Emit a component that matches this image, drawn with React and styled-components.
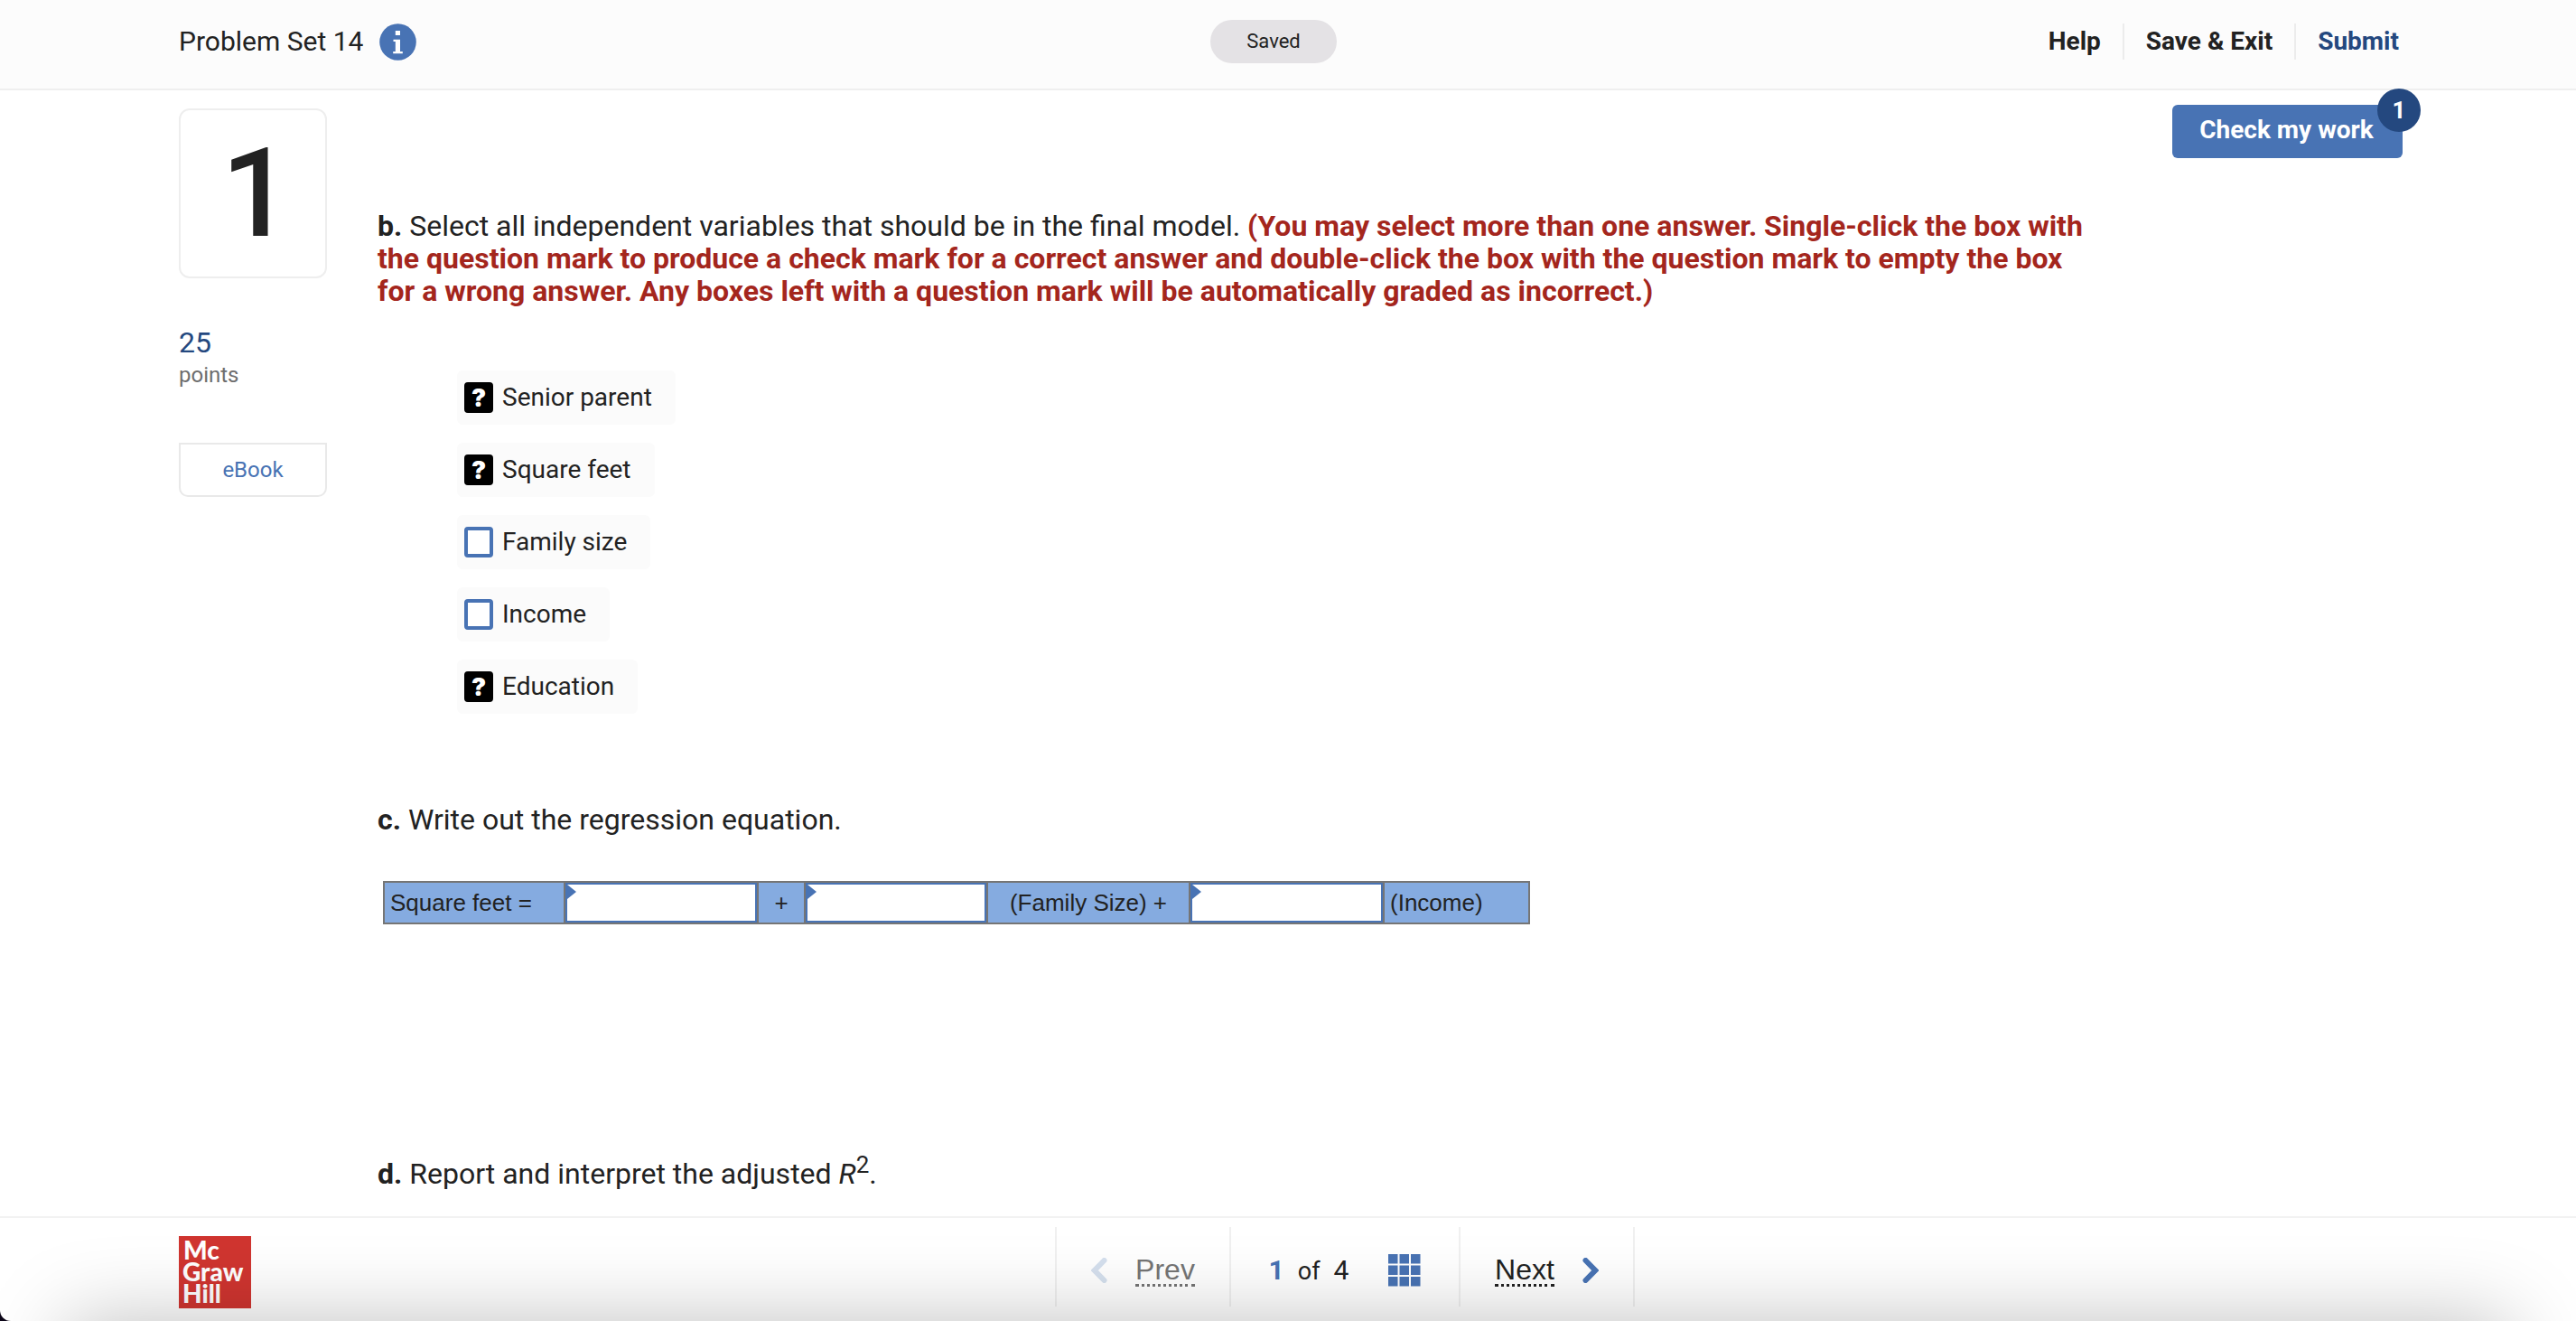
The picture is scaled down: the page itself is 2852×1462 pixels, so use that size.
import { useState } from "react";
import styled, { createGlobalStyle } from "styled-components";

const GlobalStyle = createGlobalStyle`
  * {
    box-sizing: border-box;
  }
  body {
    margin: 0;
    background: #0c0618;
    color: #222;
    font-family: Roboto, "Liberation Sans", sans-serif;
    font-size: 32px;
    line-height: 36px;
  }
  h1, h2, p, ul {
    margin: 0;
    padding: 0;
    font-size: inherit;
    font-weight: 400;
  }
  a {
    color: inherit;
    text-decoration: none;
  }
  button {
    border: 0;
    padding: 0;
    background: none;
    color: inherit;
    font: inherit;
    cursor: pointer;
  }
`;

const Page = styled.div`
  display: flex;
  flex-direction: column;
  min-height: 100vh;
  background: #fff;
  border-bottom-left-radius: 12px;
  overflow: hidden;
`;

const Header = styled.header`
  display: grid;
  grid-template-columns: 1fr auto 1fr;
  align-items: center;
  padding: 22px 196px 28px 198px;
  background: #fcfcfc;
  border-bottom: 2px solid #efefef;
`;

const TitleGroup = styled.div`
  display: flex;
  align-items: center;
  gap: 18px;
  h1 {
    font-size: 30px;
  }
`;

const InfoButton = styled.button`
  display: flex;
`;

const Saved = styled.div`
  width: 140px;
  margin-right: 34px;
  border-radius: 24px;
  background: #e4e2e5;
  font-size: 22px;
  line-height: 48px;
  text-align: center;
`;

const Actions = styled.nav`
  display: flex;
  justify-content: flex-end;
  font-size: 28px;
  font-weight: 700;
  line-height: 40px;
`;

const Action = styled.a`
  padding-left: 24px;
  color: ${({ $primary }) => ($primary ? "#24487f" : "#222")};
  &:not(:last-child) {
    padding-right: 24px;
    border-right: 2px solid #ececec;
  }
`;

const Main = styled.main`
  display: flex;
  flex: 1;
  align-items: flex-start;
  padding: 0 192px 0 198px;
`;

const Side = styled.aside`
  flex: none;
  width: 164px;
  padding-top: 20px;
`;

const QuestionNumber = styled.h2`
  padding-left: 8px;
  border: 2px solid #eee;
  border-radius: 12px;
  font-size: 138px;
  font-weight: 500;
  line-height: 184px;
  text-align: center;
`;

const Points = styled.div`
  display: flex;
  flex-direction: column;
  margin: 53px 0 57px;
  color: #6e6e6e;
  font-size: 24px;
  strong {
    color: #24487f;
    font-size: 32px;
    font-weight: 400;
  }
`;

const Ebook = styled.button`
  width: 100%;
  height: 60px;
  border: 2px solid #e9e9e9;
  border-radius: 0 0 10px 10px;
  color: #4873b4;
  font-size: 24px;
`;

const Question = styled.section`
  flex: 0 1 1900px;
  margin-left: 56px;
  padding-top: 132px;
`;

const Note = styled.strong`
  color: #a4261d;
`;

const Options = styled.ul`
  display: flex;
  flex-direction: column;
  align-items: flex-start;
  gap: 20px;
  margin: 70px 0 99px 88px;
  list-style: none;
`;

const Option = styled.label`
  display: flex;
  align-items: center;
  gap: 10px;
  height: 60px;
  padding: 0 26px 0 8px;
  border-radius: 6px;
  background: #fbfbfb;
  font-size: 28px;
`;

const Check = styled.input`
  display: flex;
  align-items: center;
  justify-content: center;
  appearance: none;
  width: 32px;
  height: 34px;
  margin: 0;
  border: 4px solid ${({ $mark }) => ($mark === "?" ? "#000" : "#4873b4")};
  border-radius: 4px;
  background: ${({ $mark }) => ($mark === "?" ? "#000" : "#fff")};
  color: ${({ $mark }) => ($mark === "?" ? "#fff" : "#4873b4")};
  font: 900 27px/27px Inter, sans-serif;
  &::after {
    content: "${({ $mark }) => $mark}";
  }
`;

const Equation = styled.table`
  width: 1270px;
  max-width: 100%;
  margin: 50px 0 258px 6px;
  table-layout: fixed;
  border-collapse: collapse;
  font-family: "Liberation Sans", Arial, sans-serif;
  font-size: 26px;
`;

const Cell = styled.td`
  position: relative;
  width: ${({ $width }) => $width}px;
  padding: 0 ${({ $pad = 0 }) => $pad}px;
  border: 2px solid #757575;
  background: #85abe0;
  text-align: ${({ $align = "left" }) => $align};
`;

const Blank = styled.input`
  display: block;
  width: 100%;
  height: 44px;
  padding: 0 14px;
  border: 2px solid #4873b4;
  background: #fff;
  font: inherit;
`;

const Flag = styled.svg`
  position: absolute;
  top: 2px;
  left: 2px;
`;

const Sup = styled.sup`
  font-size: 26px;
  line-height: 0;
`;

const CheckWork = styled.button`
  position: relative;
  flex: none;
  width: 255px;
  height: 59px;
  margin: 16px 0 0 auto;
  padding: 0 32px 4px 30px;
  border-radius: 6px;
  background: #4873b4;
  color: #fff;
  font-size: 28px;
  font-weight: 700;
  white-space: nowrap;
`;

const Badge = styled.span`
  position: absolute;
  top: -18px;
  right: -20px;
  width: 48px;
  border-radius: 50%;
  background: #24487f;
  font-size: 26px;
  line-height: 48px;
`;

const Footer = styled.footer`
  display: grid;
  grid-template-columns: 1fr auto 1fr;
  align-items: start;
  padding: 10px 72px 14px 198px;
  border-top: 2px solid #f2f2f2;
`;

const Logo = styled.svg`
  display: block;
  margin-top: 10px;
`;

const Pager = styled.nav`
  display: flex;
`;

const PagerCell = styled.div`
  display: flex;
  align-items: center;
  justify-content: center;
  width: ${({ $wide }) => ($wide ? 254 : 193)}px;
  height: 88px;
  padding-top: 8px;
  border-left: 2px solid #f0f0f0;
  &:last-child {
    width: 195px;
    border-right: 2px solid #f0f0f0;
  }
`;

const PagerButton = styled.button`
  display: flex;
  align-items: center;
  gap: 31px;
  color: #222;
  font-family: "Liberation Sans", Arial, sans-serif;
  &:disabled {
    color: #757575;
  }
  span {
    border-bottom: 3px dotted currentColor;
    line-height: 32px;
  }
`;

const Count = styled.p`
  display: flex;
  align-items: baseline;
  gap: 15px;
  margin-right: 44px;
  font-size: 30px;
  strong {
    color: #4873b4;
  }
  span {
    font-size: 27px;
  }
`;

const Shade = styled.div`
  position: fixed;
  top: 100%;
  left: 74px;
  right: 74px;
  height: 200px;
  box-shadow: 0 0 90px rgba(0, 0, 0, 0.25);
  pointer-events: none;
`;

const InfoIcon = () => (
  <svg width="41" height="41" viewBox="0 0 41 41" aria-hidden="true">
    <circle cx="20.5" cy="20.5" r="20.3" fill="#4873b4" />
    <path
      fill="#fff"
      d="M17.8 8H23v5h-5.2zM15.5 17.7H23V31h2.8v2.2H15.2V31h2.6V20h-2.3z"
    />
  </svg>
);

const Chevron = ({ left, color }) => (
  <svg width="18" height="28" viewBox="0 0 18 28" aria-hidden="true">
    <path
      d={left ? "M14.5 3 L3.8 14 L14.5 25" : "M3.5 3 L14.2 14 L3.5 25"}
      fill="none"
      stroke={color}
      strokeWidth="6"
      strokeLinecap="round"
    />
  </svg>
);

const GridIcon = () => (
  <svg width="36" height="36" viewBox="0 0 36 36" fill="#4873b4" aria-hidden="true">
    {[0, 12.5, 25].map((y) =>
      [0, 12.5, 25].map((x) => <rect key={x} x={x} y={y} width="10.5" height="10.5" />)
    )}
  </svg>
);

const McGrawHill = () => (
  <Logo
    width="80"
    height="80"
    viewBox="0 0 80 80"
    fontFamily="Lato, sans-serif"
    fontSize="28"
    fontWeight="900"
  >
    <rect width="80" height="80" fill="#d03530" />
    <g fill="#fff">
      <text x="5" y="26">Mc</text>
      <text x="4" y="50">Graw</text>
      <text x="4" y="74">Hill</text>
    </g>
  </Logo>
);

const AnswerCell = ({ width, label }) => (
  <Cell $width={width}>
    <Blank type="text" aria-label={label} />
    <Flag width="10" height="16" viewBox="0 0 10 16" aria-hidden="true">
      <path d="M0 0 L10 8 L0 16 Z" fill="#4873b4" />
    </Flag>
  </Cell>
);

const nextMark = { "?": "✓", "✓": "", "": "✓" };

const App = () => {
  const [marks, setMarks] = useState({
    "Senior parent": "?",
    "Square feet": "?",
    "Family size": "",
    Income: "",
    Education: "?",
  });

  const toggle = (name) =>
    setMarks((prev) => ({ ...prev, [name]: nextMark[prev[name]] }));

  return (
    <Page>
      <GlobalStyle />
      <Header>
        <TitleGroup>
          <h1>Problem Set 14</h1>
          <InfoButton aria-label="Assignment information">
            <InfoIcon />
          </InfoButton>
        </TitleGroup>
        <Saved>Saved</Saved>
        <Actions>
          <Action href="#help">Help</Action>
          <Action href="#exit">Save &amp; Exit</Action>
          <Action href="#submit" $primary>
            Submit
          </Action>
        </Actions>
      </Header>

      <Main>
        <Side>
          <QuestionNumber>1</QuestionNumber>
          <Points>
            <strong>25</strong>
            <span>points</span>
          </Points>
          <Ebook>eBook</Ebook>
        </Side>

        <Question>
          <p>
            <strong>b.</strong> Select all independent variables that should be
            in the final model.{" "}
            <Note>
              (You may select more than one answer. Single-click the box with
              the question mark to produce a check mark for a correct answer and
              double-click the box with the question mark to empty the box for a
              wrong answer. Any boxes left with a question mark will be
              automatically graded as incorrect.)
            </Note>
          </p>
          <Options>
            {Object.entries(marks).map(([name, mark]) => (
              <li key={name}>
                <Option>
                  <Check
                    type="checkbox"
                    $mark={mark}
                    checked={mark === "✓"}
                    onChange={() => toggle(name)}
                  />
                  {name}
                </Option>
              </li>
            ))}
          </Options>

          <p>
            <strong>c.</strong> Write out the regression equation.
          </p>
          <Equation>
            <tbody>
              <tr>
                <Cell $width={200} $pad={6}>
                  Square feet =
                </Cell>
                <AnswerCell width={214} label="Intercept" />
                <Cell $width={52} $align="center">
                  +
                </Cell>
                <AnswerCell width={202} label="Family size coefficient" />
                <Cell $width={224} $align="center">
                  (Family Size) +
                </Cell>
                <AnswerCell width={215} label="Income coefficient" />
                <Cell $width={161} $pad={6}>
                  (Income)
                </Cell>
              </tr>
            </tbody>
          </Equation>

          <p>
            <strong>d.</strong> Report and interpret the adjusted <i>R</i>
            <Sup>2</Sup>.
          </p>
        </Question>

        <CheckWork>
          Check my work
          <Badge>1</Badge>
        </CheckWork>
      </Main>

      <Footer>
        <McGrawHill />
        <Pager>
          <PagerCell>
            <PagerButton disabled>
              <Chevron left color="#d5e0ee" />
              <span>Prev</span>
            </PagerButton>
          </PagerCell>
          <PagerCell $wide>
            <Count>
              <strong>1</strong>
              <span>of</span>4
            </Count>
            <InfoButton aria-label="Question list">
              <GridIcon />
            </InfoButton>
          </PagerCell>
          <PagerCell>
            <PagerButton>
              <span>Next</span>
              <Chevron color="#4873b4" />
            </PagerButton>
          </PagerCell>
        </Pager>
      </Footer>
      <Shade />
    </Page>
  );
};

export default App;
